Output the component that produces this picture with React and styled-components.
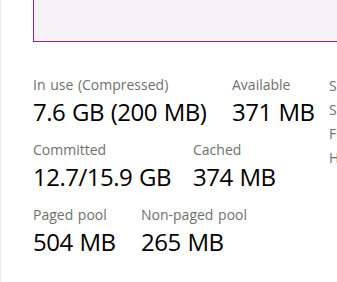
import React from 'react'
import styled, { createGlobalStyle } from 'styled-components'

const Global = createGlobalStyle`
  html, body {
    margin: 0;
    padding: 0;
    background: #fff;
    overflow: hidden;
  }
  body {
    font-family: "Open Sans", "Noto Sans", sans-serif;
  }
`

const Page = styled.div`
  width: 337px;
  height: 282px;
  box-sizing: border-box;
  border-left: 1px solid #efefef;
  padding-left: 32px;
  overflow: hidden;
`

const Graph = styled.div`
  height: 41px;
  margin-right: -20px;
  background: rgb(244, 242, 245);
  border-left: 1px solid rgb(150, 24, 196);
  border-bottom: 1px solid rgb(150, 24, 196);
`

const Details = styled.div`
  display: flex;
  margin-top: 33px;
`

const Rows = styled.div`
  display: flex;
  flex-direction: column;
  gap: 12px;
  width: 296px;
  flex-shrink: 0;
`

const Row = styled.div`
  display: flex;
`

const Stat = styled.div`
  display: flex;
  flex-direction: column;
  gap: 2px;
  white-space: nowrap;
  width: ${p => (p.$width ? `${p.$width}px` : 'auto')};
  flex-shrink: 0;
`

const Label = styled.div`
  font-size: 14px;
  line-height: 19px;
  word-spacing: 1px;
  color: #707070;
`

const Value = styled.div`
  font-size: 24px;
  line-height: 32px;
  letter-spacing: -0.5px;
  word-spacing: 1px;
  color: #000;
`

const Side = styled.div`
  display: flex;
  flex-direction: column;
  margin-top: -1px;
  white-space: nowrap;
`

const SideLabel = styled.div`
  font-size: 14px;
  line-height: 24px;
  color: #707070;
`

const rows = [
  [
    { label: 'In use (Compressed)', value: '7.6 GB (200 MB)', width: 199 },
    { label: 'Available', value: '371 MB' },
  ],
  [
    { label: 'Committed', value: '12.7/15.9 GB', width: 160 },
    { label: 'Cached', value: '374 MB' },
  ],
  [
    { label: 'Paged pool', value: '504 MB', width: 108 },
    { label: 'Non-paged pool', value: '265 MB' },
  ],
]

const side = ['Speed:', 'Slots used:', 'Form factor:', 'Hardware reserved:']

const App = () => (
  <Page>
    <Global />
    <Graph />
    <Details>
      <Rows>
        {rows.map((row, i) => (
          <Row key={i}>
            {row.map(s => (
              <Stat key={s.label} $width={s.width}>
                <Label>{s.label}</Label>
                <Value>{s.value}</Value>
              </Stat>
            ))}
          </Row>
        ))}
      </Rows>
      <Side>
        {side.map(s => (
          <SideLabel key={s}>{s}</SideLabel>
        ))}
      </Side>
    </Details>
  </Page>
)

export default App
